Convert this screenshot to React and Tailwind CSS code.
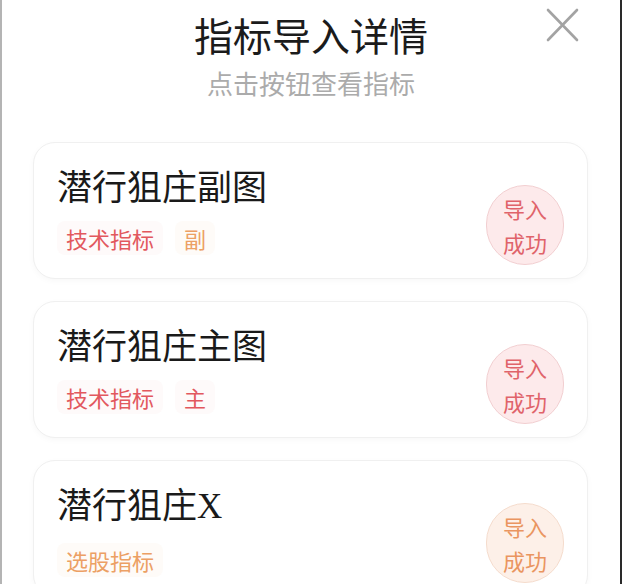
const items = [
  {
    name: '潜行狙庄副图',
    tags: [
      { label: '技术指标', tone: 'red' },
      { label: '副', tone: 'orange' },
    ],
    status: 'red',
  },
  {
    name: '潜行狙庄主图',
    tags: [
      { label: '技术指标', tone: 'red' },
      { label: '主', tone: 'red' },
    ],
    status: 'red',
  },
  {
    name: '潜行狙庄',
    suffix: 'X',
    tags: [{ label: '选股指标', tone: 'orange' }],
    status: 'orange',
  },
]

function Tag({ label, tone }) {
  return (
    <span
      className={`rounded-[8px] px-[9px] py-[6px] text-[22px] leading-[22px] ${
        tone === 'red' ? 'bg-[#fefafa] text-[#e2585e]' : 'bg-[#fefbf8] text-[#eca064]'
      }`}
    >
      {label}
    </span>
  )
}

function Badge({ tone }) {
  const isRed = tone === 'red'
  return (
    <div
      className={`mt-[42px] flex h-[80px] w-[78px] shrink-0 flex-col items-center justify-center rounded-full border text-[22px] leading-[34px] ${
        isRed
          ? 'border-[#f2cfd1] bg-[#fdeaeb] text-[#e0636a]'
          : 'border-[#f5dccd] bg-[#fdf0e8] text-[#ea9560]'
      }`}
    >
      <span>导入</span>
      <span>成功</span>
    </div>
  )
}

export default function App() {
  return (
    <div
      className="h-[584px] w-[622px] overflow-hidden border-l-2 border-r-2 border-l-[#b4b4b4] border-r-[#2a2a2a] bg-white"
      style={{ fontFamily: '"Noto Sans CJK SC", "Noto Sans", sans-serif' }}
    >
      <div className="relative flex flex-col items-center pt-[15px]">
        <h1 className="text-[39px] leading-[39px] text-[#1b1b1b]">指标导入详情</h1>
        <p className="mt-[16px] text-[26px] leading-[26px] text-[#ababab]">点击按钮查看指标</p>
        <button type="button" className="absolute right-[39px] top-[6px] p-[2px]">
          <svg width="33" height="34" viewBox="0 0 33 34" fill="none">
            <path d="M2 2L31 32M31 2L2 32" stroke="#a3a3a3" strokeWidth="2.6" strokeLinecap="round" />
          </svg>
        </button>
      </div>

      <div className="mt-[46px] flex flex-col gap-[22px] pl-[31px] pr-[32px]">
        {items.map((item) => (
          <div
            key={item.name + (item.suffix || '')}
            className="flex h-[137px] shrink-0 items-start justify-between rounded-[22px] border border-[#f0f0f0] bg-white pl-[23px] pr-[23px] shadow-[0_2px_6px_rgba(0,0,0,0.03)]"
          >
            <div className="pt-[24px]">
              <h3 className="text-[35px] leading-[35px] text-[#1a1a1a]">
                {item.name}
                {item.suffix && (
                  <span style={{ fontFamily: '"Liberation Serif", serif' }}>{item.suffix}</span>
                )}
              </h3>
              <div className="mt-[19px] flex gap-[12px]">
                {item.tags.map((tag) => (
                  <Tag key={tag.label} {...tag} />
                ))}
              </div>
            </div>
            <Badge tone={item.status} />
          </div>
        ))}
      </div>
    </div>
  )
}
